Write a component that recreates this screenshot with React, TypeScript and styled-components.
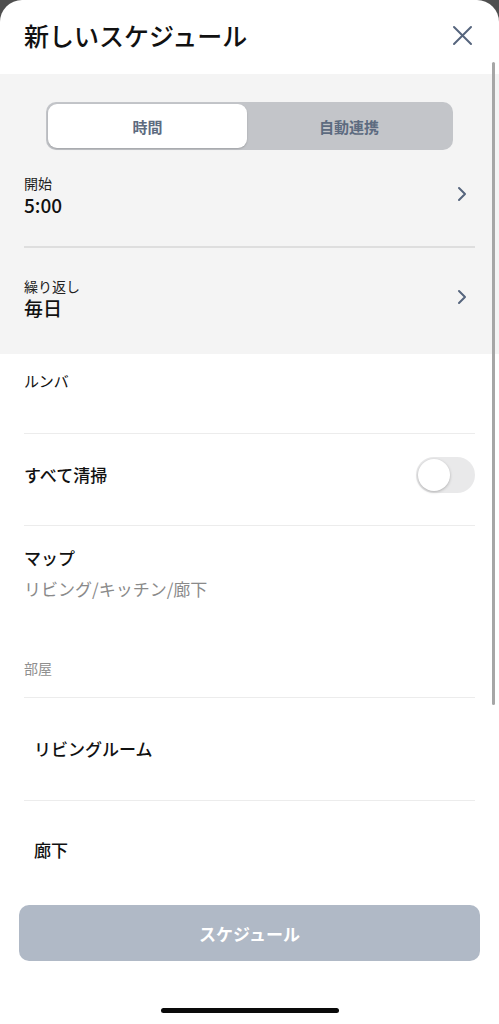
import React, { useState } from 'react';
import styled, { createGlobalStyle } from 'styled-components';

const GlobalStyle = createGlobalStyle`
    html, body {
        margin: 0;
        padding: 0;
        background: #4f4f4f;
    }
    body {
        font-family: "Noto Sans CJK JP", "Noto Sans", sans-serif;
        color: #111;
    }
`;

const Sheet = styled.div`
    position: relative;
    width: 499px;
    height: 1024px;
    background: #fff;
    border-radius: 22px 22px 0 0;
    overflow: hidden;
    display: flex;
    flex-direction: column;
`;

const Header = styled.div`
    height: 74px;
    display: flex;
    align-items: center;
    justify-content: space-between;
    padding: 0 26px 4px 24px;
    box-sizing: border-box;
`;

const Title = styled.h1`
    margin: 0;
    font-size: 25px;
    font-weight: 500;
    line-height: 32px;
`;

const CloseButton = styled.button`
    border: none;
    background: none;
    padding: 0;
    width: 22px;
    height: 22px;
    display: flex;
    align-items: center;
    justify-content: center;
`;

const GreySection = styled.div`
    background: #f4f4f4;
    padding: 28px 24px 0;
    height: 280px;
    box-sizing: border-box;
    display: flex;
    flex-direction: column;
`;

const Segmented = styled.div`
    margin: 0 22px;
    height: 48px;
    background: #c3c5c9;
    border-radius: 10px;
    padding: 2px;
    box-sizing: border-box;
    display: grid;
    grid-template-columns: 199px 1fr;
`;

const Segment = styled.div<{ $active?: boolean }>`
    display: flex;
    align-items: center;
    justify-content: center;
    border-radius: 9px;
    font-size: 15px;
    font-weight: 700;
    color: #5d6b80;
    background: ${(p) => (p.$active ? '#fff' : 'transparent')};
    box-shadow: ${(p) => (p.$active ? '0 1px 2px rgba(0,0,0,0.18)' : 'none')};
`;

const PickerRow = styled.div<{ $top: number; $height: number }>`
    display: flex;
    align-items: flex-start;
    justify-content: space-between;
    padding-top: ${(p) => p.$top}px;
    height: ${(p) => p.$height}px;
    box-sizing: border-box;
`;

const PickerText = styled.div`
    display: flex;
    flex-direction: column;
`;

const PickerLabel = styled.span`
    font-size: 14px;
    line-height: 20px;
    color: #222;
`;

const PickerValue = styled.span`
    font-size: 19px;
    font-weight: 500;
    line-height: 24px;
`;

const Chevron = styled.div`
    margin-top: 13px;
    margin-right: 8px;
    display: flex;
`;

const GreyDivider = styled.div`
    height: 2px;
    background: #dedede;
`;

const Divider = styled.div`
    height: 1px;
    background: #ececec;
    margin: 0 24px;
`;

const PlainRow = styled.div<{ $height: number; $indent?: number; $lift?: number }>`
    height: ${(p) => p.$height}px;
    display: flex;
    align-items: center;
    justify-content: space-between;
    padding: 0 24px ${(p) => p.$lift ?? 0}px ${(p) => p.$indent ?? 24}px;
    box-sizing: border-box;
`;

const DeviceLabel = styled.div`
    padding: 16px 24px 0;
    height: 79px;
    box-sizing: border-box;
    font-size: 15px;
    line-height: 22px;
`;

const RowTitle = styled.span`
    font-size: 17px;
    font-weight: 500;
    line-height: 24px;
`;

const Toggle = styled.div`
    width: 59px;
    height: 36px;
    border-radius: 18px;
    background: #e9e9ea;
    padding: 2px;
    box-sizing: border-box;
    display: flex;
`;

const Knob = styled.div`
    width: 32px;
    height: 32px;
    border-radius: 50%;
    background: #fff;
    box-shadow: 0 1px 3px rgba(0, 0, 0, 0.25);
`;

const MapBlock = styled.div`
    padding: 20px 24px 19px;
    display: flex;
    flex-direction: column;
`;

const MapSub = styled.span`
    margin-top: 7px;
    font-size: 17px;
    line-height: 24px;
    color: #8a8a8a;
`;

const SectionHint = styled.span`
    margin-top: 57px;
    font-size: 14px;
    line-height: 20px;
    color: #8f8f8f;
`;

const Footer = styled.div`
    padding: 4px 19px 0;
    display: flex;
    flex-direction: column;
    align-items: center;
`;

const PrimaryButton = styled.button`
    width: 100%;
    height: 56px;
    border: none;
    border-radius: 10px;
    background: #b0b9c6;
    color: #fff;
    font-family: inherit;
    font-size: 17px;
    font-weight: 700;
`;

const HomeIndicator = styled.div`
    margin-top: 47px;
    width: 178px;
    height: 5px;
    border-radius: 3px;
    background: #0a0a0a;
`;

const ScrollThumb = styled.div`
    position: absolute;
    right: 4px;
    top: 62px;
    width: 3px;
    height: 643px;
    border-radius: 2px;
    background: #a6a6a6;
`;

const ChevronIcon = () => (
    <svg width="10" height="16" viewBox="0 0 10 16">
        <path d="M2 2 L8 8 L2 14" fill="none" stroke="#56657d" strokeWidth="2" strokeLinecap="round" strokeLinejoin="round" />
    </svg>
);

const rooms = ['リビングルーム', '廊下'];

export default function App() {
    const [tab, setTab] = useState<'time' | 'auto'>('time');

    return (
        <>
            <GlobalStyle />
            <Sheet>
                <Header>
                    <Title>新しいスケジュール</Title>
                    <CloseButton aria-label="閉じる">
                        <svg width="21" height="21" viewBox="0 0 21 21">
                            <path d="M2 2 L19 19 M19 2 L2 19" stroke="#56657d" strokeWidth="2" strokeLinecap="round" />
                        </svg>
                    </CloseButton>
                </Header>
                <GreySection>
                    <Segmented>
                        <Segment $active={tab === 'time'} onClick={() => setTab('time')}>時間</Segment>
                        <Segment $active={tab === 'auto'} onClick={() => setTab('auto')}>自動連携</Segment>
                    </Segmented>
                    <PickerRow $top={23} $height={96}>
                        <PickerText>
                            <PickerLabel>開始</PickerLabel>
                            <PickerValue>5:00</PickerValue>
                        </PickerText>
                        <Chevron><ChevronIcon /></Chevron>
                    </PickerRow>
                    <GreyDivider />
                    <PickerRow $top={28} $height={104}>
                        <PickerText>
                            <PickerLabel>繰り返し</PickerLabel>
                            <PickerValue>毎日</PickerValue>
                        </PickerText>
                        <Chevron><ChevronIcon /></Chevron>
                    </PickerRow>
                </GreySection>
                <DeviceLabel>ルンバ</DeviceLabel>
                <Divider />
                <PlainRow $height={91} $lift={9}>
                    <RowTitle>すべて清掃</RowTitle>
                    <Toggle><Knob /></Toggle>
                </PlainRow>
                <Divider />
                <MapBlock>
                    <RowTitle>マップ</RowTitle>
                    <MapSub>リビング/キッチン/廊下</MapSub>
                    <SectionHint>部屋</SectionHint>
                </MapBlock>
                <Divider />
                <PlainRow $height={102} $indent={34}>
                    <RowTitle>{rooms[0]}</RowTitle>
                </PlainRow>
                <Divider />
                <PlainRow $height={100} $indent={34} $lift={2}>
                    <RowTitle>{rooms[1]}</RowTitle>
                </PlainRow>
                <Footer>
                    <PrimaryButton>スケジュール</PrimaryButton>
                    <HomeIndicator />
                </Footer>
                <ScrollThumb />
            </Sheet>
        </>
    );
}
